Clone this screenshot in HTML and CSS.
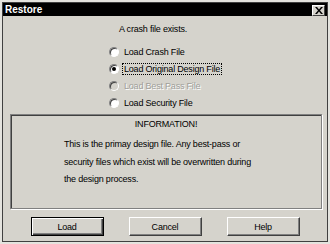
FILE: index.html
```html
<!DOCTYPE html>
<html lang="en">
<head>
    <meta charset="UTF-8">
    <title>Restore</title>
    <link rel="stylesheet" href="styles.css">
</head>
<body>
    <div class="window">
        <div class="title-bar">
            <span class="title">Restore</span>
            <button class="close-btn" aria-label="Close">
                <svg width="8" height="7" viewBox="0 0 8 7">
                    <path d="M0 0h2l2 2.5 2-2.5h2L5 3.5 8 7H6L4 4.5 2 7H0l3-3.5z" fill="#000"/>
                </svg>
            </button>
        </div>

        <div class="choices">
            <p class="choices-head">A crash file exists.</p>
            <label class="choice">
                <span class="radio"></span>
                <span class="choice-text">Load Crash File</span>
            </label>
            <label class="choice">
                <span class="radio checked"></span>
                <span class="choice-text focused">Load Original Design File</span>
            </label>
            <label class="choice disabled">
                <span class="radio"></span>
                <span class="choice-text">Load Best Pass File</span>
            </label>
            <label class="choice">
                <span class="radio"></span>
                <span class="choice-text">Load Security File</span>
            </label>
        </div>

        <div class="info-box">
            <h4>INFORMATION!</h4>
            <p>This is the primay design file. Any best-pass or<br>security files which exist will be overwritten during<br>the design process.</p>
        </div>

        <div class="buttons">
            <button class="btn default">Load</button>
            <button class="btn">Cancel</button>
            <button class="btn">Help</button>
        </div>
    </div>
</body>
</html>
```

FILE: styles.css
```css
:root {
    --face: #d5d3cc;
    --shadow: #808080;
    --dark: #404040;
    --light: #ffffff;
}
* { box-sizing: border-box; }
html, body { margin: 0; height: 100%; }
body {
    background: #e4e3de;
    font-family: "Liberation Sans", Arial, sans-serif;
    font-size: 9px;
    letter-spacing: -0.2px;
    color: #000;
}
.window {
    margin: 2px;
    height: 240px;
    border: 1px solid var(--dark);
    background: var(--face);
}
.title-bar {
    height: 13px;
    background: #000;
    display: flex;
    align-items: center;
    justify-content: space-between;
    padding: 0 2px 0 2px;
}
.title {
    color: #fff;
    font-weight: bold;
    font-size: 10px;
    letter-spacing: 0;
}
.close-btn {
    width: 13px;
    height: 11px;
    margin-top: 1px;
    padding: 0;
    border: 1px solid;
    border-color: var(--light) var(--dark) var(--dark) var(--light);
    background: var(--face);
    display: flex;
    align-items: center;
    justify-content: center;
}

.choices {
    margin: 5px 0 0 106px;
}
.choices-head {
    margin: 0 0 5px;
    padding-left: 10px;
    line-height: 17px;
    height: 17px;
}
.choice {
    display: flex;
    align-items: center;
    height: 17px;
    gap: 4px;
}
.radio {
    position: relative;
    width: 10px;
    height: 10px;
    border-radius: 50%;
    border: 1px solid;
    border-color: var(--shadow) var(--light) var(--light) var(--shadow);
    background: #fff;
    box-shadow: inset 1px 1px 0 var(--dark);
}
.radio.checked::after {
    content: "";
    position: absolute;
    left: 2px;
    top: 2px;
    width: 4px;
    height: 4px;
    border-radius: 50%;
    background: #000;
}
.choice-text {
    line-height: 10px;
    padding: 0 1px;
    border: 1px dotted transparent;
    margin-left: -1px;
}
.choice-text.focused { border-color: #000; }
.choice.disabled .radio { background: var(--face); }
.choice.disabled .choice-text {
    color: #a09f9a;
    text-shadow: 1px 1px 0 #fff;
}

.info-box {
    margin: 3px 5px 0 7px;
    height: 95px;
    border: 1px solid var(--shadow);
    box-shadow: inset 1px 1px 0 var(--dark), 1px 1px 0 var(--light);
    padding-top: 1px;
}
.info-box h4 {
    margin: 0;
    font-weight: normal;
    text-align: center;
    line-height: 17px;
}
.info-box p {
    margin: 3px 0 0 53px;
    line-height: 17.5px;
}

.buttons {
    display: flex;
    justify-content: center;
    gap: 25px;
    margin-top: 8px;
}
.btn {
    width: 73px;
    height: 19px;
    padding: 0;
    font-family: inherit;
    font-size: 9px;
    letter-spacing: -0.2px;
    color: #000;
    background: var(--face);
    border: 1px solid;
    border-color: var(--light) var(--dark) var(--dark) var(--light);
    box-shadow: inset -1px -1px 0 var(--shadow);
}
.btn.default {
    border: 1px solid #000;
    box-shadow: inset 1px 1px 0 var(--light), inset -1px -1px 0 var(--dark), inset -2px -2px 0 var(--shadow);
}
```
